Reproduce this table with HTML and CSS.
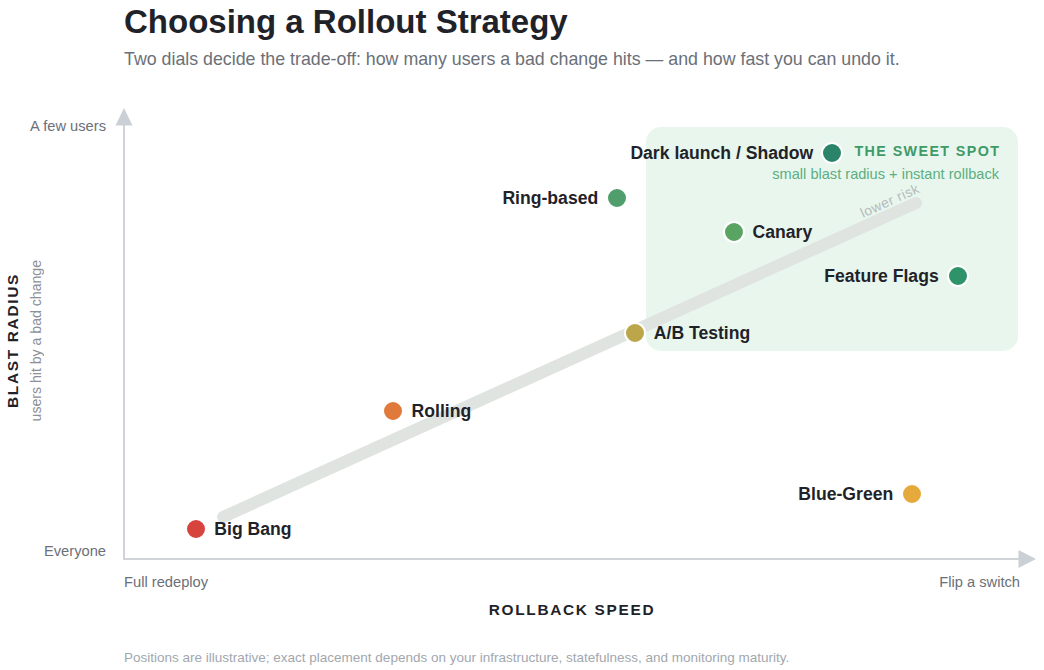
FILE: index.html
```html
<!DOCTYPE html>
<html lang="en">
<head>
<meta charset="utf-8">
<title>Choosing a Rollout Strategy</title>
<link rel="stylesheet" href="styles.css">
</head>
<body>
<main class="page">
  <header class="header">
    <h1 class="title">Choosing a Rollout Strategy</h1>
    <p class="subtitle">Two dials decide the trade-off: how many users a bad change hits — and how fast you can undo it.</p>
  </header>

  <section class="chart">
    <div class="ytitle">
      <span class="axis-name">BLAST RADIUS</span>
      <span class="axis-hint">users hit by a bad change</span>
    </div>
    <div class="yticks">
      <span>A few users</span>
      <span>Everyone</span>
    </div>

    <div class="plot">
      <svg class="plot-svg" width="896" height="452" viewBox="0 0 896 452" aria-hidden="true">
        <rect class="sweet-bg" x="522" y="19" width="372" height="224" rx="15"/>
        <line class="trend" x1="99" y1="409" x2="792" y2="95"/>
        <text class="trend-label" x="739" y="110" transform="rotate(-24.4 739 110)">lower risk</text>
        <line class="axis" x1="0" y1="16" x2="0" y2="452"/>
        <line class="axis" x1="-1" y1="451" x2="895" y2="451"/>
        <polygon class="arrow" points="0,0 -8.5,17.5 8.5,17.5"/>
        <polygon class="arrow" points="912,451 894.5,442 894.5,460"/>
      </svg>

      <div class="sweet-label">
        <div class="sweet-title">THE SWEET SPOT</div>
        <div class="sweet-sub">small blast radius + instant rollback</div>
      </div>

      <div class="pt" style="--x:71.5px;--y:421px"><span class="dot c-red"></span><span class="pt-label">Big Bang</span></div>
      <div class="pt" style="--x:268.8px;--y:303px"><span class="dot c-orange"></span><span class="pt-label">Rolling</span></div>
      <div class="pt" style="--x:511px;--y:224.7px"><span class="dot c-olive"></span><span class="pt-label">A/B Testing</span></div>
      <div class="pt left" style="--x:493px;--y:89.8px"><span class="dot c-green"></span><span class="pt-label">Ring-based</span></div>
      <div class="pt" style="--x:609.8px;--y:124.5px"><span class="dot c-lime"></span><span class="pt-label">Canary</span></div>
      <div class="pt left" style="--x:833.5px;--y:167.8px"><span class="dot c-teal"></span><span class="pt-label">Feature Flags</span></div>
      <div class="pt left" style="--x:708px;--y:45.3px"><span class="dot c-deep"></span><span class="pt-label">Dark launch / Shadow</span></div>
      <div class="pt left" style="--x:788px;--y:386.5px"><span class="dot c-amber"></span><span class="pt-label">Blue-Green</span></div>
    </div>

    <div class="xticks">
      <span>Full redeploy</span>
      <span>Flip a switch</span>
    </div>
    <div class="xtitle">ROLLBACK SPEED</div>
  </section>

  <p class="note">Positions are illustrative; exact placement depends on your infrastructure, statefulness, and monitoring maturity.</p>
</main>
</body>
</html>
```
FILE: styles.css
```css
* { box-sizing: border-box; }

html, body {
  margin: 0;
  background: #ffffff;
}

body {
  font-family: "Liberation Sans", Arial, Helvetica, sans-serif;
  color: #1f2329;
  width: 1044px;
  height: 670px;
  overflow: hidden;
}

.header {
  padding-left: 124px;
}

.title {
  margin: 0;
  padding-top: 2px;
  font-size: 33px;
  line-height: 40px;
  font-weight: 700;
  color: #1f2329;
}

.subtitle {
  margin: 6.6px 0 0;
  font-size: 17.8px;
  line-height: 20px;
  color: #6b7078;
  white-space: nowrap;
}

.chart {
  display: grid;
  grid-template-columns: 50px 74px 896px;
  grid-template-rows: 452px auto auto;
  margin-top: 39.4px;
}

.ytitle {
  grid-column: 1;
  grid-row: 1;
  display: flex;
  align-items: center;
  gap: 6px;
  padding: 14px 0 0 4px;
}

.ytitle span {
  writing-mode: vertical-rl;
  transform: rotate(180deg);
  white-space: nowrap;
}

.axis-name {
  font-size: 15.4px;
  line-height: 18px;
  font-weight: 700;
  letter-spacing: 1.7px;
  color: #1f2329;
}

.axis-hint {
  font-size: 14.1px;
  line-height: 17px;
  color: #8b9099;
}

.yticks {
  grid-column: 2;
  grid-row: 1;
  display: flex;
  flex-direction: column;
  justify-content: space-between;
  align-items: flex-end;
  padding: 10px 18px 0 0;
  font-size: 14.7px;
  line-height: 17px;
  color: #6b7078;
  white-space: nowrap;
}

.plot {
  grid-column: 3;
  grid-row: 1;
  position: relative;
}

.plot-svg {
  position: absolute;
  left: 0;
  top: 0;
  overflow: visible;
}

.sweet-bg { fill: #e8f6ee; }

.trend {
  stroke: #e0e4e1;
  stroke-width: 12;
  stroke-linecap: round;
}

.trend-label {
  font-family: "Liberation Sans", Arial, sans-serif;
  font-size: 13.8px;
  letter-spacing: 0.5px;
  fill: #b6bbbd;
}

.axis {
  stroke: #d0d4d9;
  stroke-width: 2;
}

.arrow { fill: #cbd0d6; }

.sweet-label {
  position: absolute;
  right: 21px;
  top: 35.2px;
  text-align: right;
  white-space: nowrap;
}

.sweet-title {
  font-size: 14.3px;
  line-height: 17px;
  font-weight: 700;
  letter-spacing: 1.4px;
  margin-right: -1.4px;
  color: #3e9a66;
}

.sweet-sub {
  margin-top: 6px;
  font-size: 14.6px;
  line-height: 17px;
  color: #5cae80;
}

.pt {
  position: absolute;
  left: calc(var(--x) - 11px);
  top: var(--y);
  transform: translateY(-50%);
  display: flex;
  align-items: center;
  gap: 7.8px;
  white-space: nowrap;
}

.pt.left {
  left: auto;
  right: calc(100% - var(--x) - 11px);
  flex-direction: row-reverse;
}

.dot {
  flex: none;
  width: 22px;
  height: 22px;
  border: 2.2px solid #ffffff;
  border-radius: 50%;
}

.pt-label {
  font-size: 17.6px;
  line-height: 20px;
  font-weight: 700;
  color: #1f2329;
}

.c-red { background: #d7443e; }
.c-orange { background: #e07a3a; }
.c-olive { background: #bba64a; }
.c-green { background: #4f9e6b; }
.c-lime { background: #5aa463; }
.c-teal { background: #2f936a; }
.c-deep { background: #2b8469; }
.c-amber { background: #e5a93c; }

.xticks {
  grid-column: 3;
  grid-row: 2;
  display: flex;
  justify-content: space-between;
  margin-top: 14px;
  font-size: 14.7px;
  line-height: 17px;
  color: #6b7078;
}

.xtitle {
  grid-column: 3;
  grid-row: 3;
  margin-top: 9.9px;
  text-align: center;
  font-size: 15.4px;
  line-height: 18px;
  font-weight: 700;
  letter-spacing: 1.7px;
  color: #1f2329;
}

.note {
  margin: 31px 0 0;
  padding-left: 124px;
  font-size: 13.5px;
  line-height: 16px;
  color: #a2a7ae;
}
```
